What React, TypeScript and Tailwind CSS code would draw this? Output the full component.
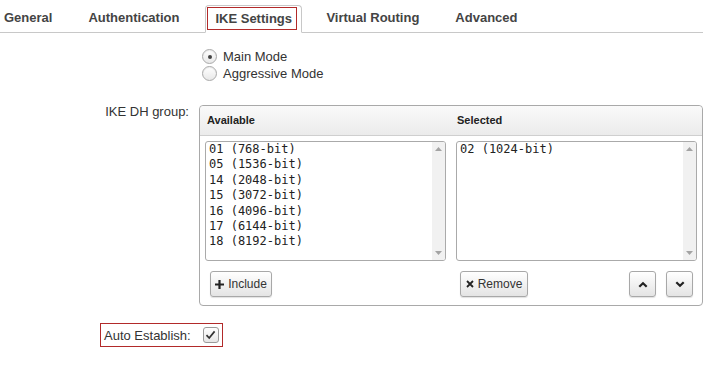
import React from "react";

const dhAvailable = [
  "01 (768-bit)",
  "05 (1536-bit)",
  "14 (2048-bit)",
  "15 (3072-bit)",
  "16 (4096-bit)",
  "17 (6144-bit)",
  "18 (8192-bit)",
];
const dhSelected = ["02 (1024-bit)"];

// Radio button
function Radio({ checked, label }: { checked?: boolean; label: string }) {
  return (
    <div className="flex items-center h-[17px]">
      <span className="w-[15px] h-[15px] rounded-full border border-[#a9a9a9] bg-gradient-to-b from-white to-[#e8e8e8] flex items-center justify-center shadow-[inset_0_1px_1px_rgba(0,0,0,0.08)]">
        {checked && <span className="w-[4px] h-[4px] rounded-full bg-[#444]" />}
      </span>
      <span className="ml-[6px] text-[13px] text-[#333] leading-[15px]">{label}</span>
    </div>
  );
}

// List box with a fake scrollbar
function ListBox({ items }: { items: string[] }) {
  return (
    <div className="w-[241px] h-[120px] border border-[#aaa] rounded-[3px] flex bg-white overflow-hidden">
      <div className="flex-1 pl-[3px] font-['DejaVu_Sans_Mono',monospace] text-[12px] leading-[15.4px] text-[#222]">
        {items.map((it) => (
          <div key={it}>{it}</div>
        ))}
      </div>
      <div className="w-[13px] bg-[#f1f1f1] flex flex-col justify-between items-center py-[5px]">
        <svg width="7" height="4" viewBox="0 0 7 4">
          <path d="M0 4 L3.5 0 L7 4 Z" fill="#a3a3a3" />
        </svg>
        <svg width="7" height="4" viewBox="0 0 7 4">
          <path d="M0 0 L3.5 4 L7 0 Z" fill="#a3a3a3" />
        </svg>
      </div>
    </div>
  );
}

function Button({ children, className }: { children: React.ReactNode; className?: string }) {
  return (
    <button
      className={`h-[26px] border border-[#a8a8a8] rounded-[3px] bg-gradient-to-b from-white to-[#e4e4e4] shadow-[0_1px_1px_rgba(0,0,0,0.12)] flex items-center justify-center text-[12px] text-[#333] ${className ?? ""}`}
    >
      {children}
    </button>
  );
}

export default function App() {
  return (
    <div className="w-[703px] h-[370px] bg-white overflow-hidden font-['Liberation_Sans',Arial,sans-serif] text-[#333]">
      {/* Tabs */}
      <div className="flex items-end h-[33px] border-b border-[#c8c8c8] text-[13px] font-bold text-[#444]">
        <div className="ml-[4px] pb-[5px]">General</div>
        <div className="ml-[36px] pb-[5px]">Authentication</div>
        <div className="ml-[26px] -mb-px h-[28px] w-[97px] border border-[#c8c8c8] border-b-white rounded-t-[4px] bg-white pt-px pl-px">
          <div className="h-[23px] w-[90px] border border-[#b22a2a] flex items-center pl-[7px]">IKE Settings</div>
        </div>
        <div className="ml-[24px] pb-[5px]">Virtual Routing</div>
        <div className="ml-[36px] pb-[5px]">Advanced</div>
      </div>

      {/* Mode */}
      <div className="pl-[202px] pt-[15px] flex flex-col">
        <Radio checked label="Main Mode" />
        <Radio label="Aggressive Mode" />
      </div>

      {/* DH group */}
      <div className="flex mt-[23px]">
        <div className="w-[199px] pr-[10px] text-right text-[13px] leading-[13px]">IKE DH group:</div>
        <div className="w-[504px] h-[201px] border border-[#a9a9a9] rounded-[4px] flex flex-col">
          <div className="h-[30px] bg-gradient-to-b from-[#fafafa] to-[#ebebeb] border-b border-[#cfcfcf] rounded-t-[4px] flex items-center text-[11px] font-bold text-[#222]">
            <div className="w-[250px] pl-[7px]">Available</div>
            <div className="pl-[7px]">Selected</div>
          </div>
          <div className="flex gap-[10px] px-[5px] pt-[5px]">
            <ListBox items={dhAvailable} />
            <ListBox items={dhSelected} />
          </div>
          <div className="flex items-center px-[5px] mt-[10px]">
            <div className="w-[251px] pl-[5px]">
              <Button className="w-[62px] gap-[4px]">
                <svg width="9" height="9" viewBox="0 0 9 9">
                  <path d="M3.4 0h2.2v3.4H9v2.2H5.6V9H3.4V5.6H0V3.4h3.4z" fill="#222" />
                </svg>
                Include
              </Button>
            </div>
            <div className="flex-1 flex items-center pl-[4px]">
              <Button className="w-[68px] gap-[4px]">
                <svg width="8" height="8" viewBox="0 0 8 8">
                  <path d="M1 1 L7 7 M7 1 L1 7" stroke="#222" strokeWidth="1.8" />
                </svg>
                Remove
              </Button>
              <div className="flex-1" />
              <Button className="w-[27px]">
                <svg width="10" height="7" viewBox="0 0 10 7">
                  <path d="M1.3 5.8 L5 2.2 L8.7 5.8" fill="none" stroke="#222" strokeWidth="2.2" />
                </svg>
              </Button>
              <Button className="w-[27px] ml-[10px] mr-[4px]">
                <svg width="10" height="7" viewBox="0 0 10 7">
                  <path d="M1.3 1.2 L5 4.8 L8.7 1.2" fill="none" stroke="#222" strokeWidth="2.2" />
                </svg>
              </Button>
            </div>
          </div>
        </div>
      </div>

      {/* Auto establish */}
      <div className="ml-[100px] mt-[17px] w-[123px] h-[24px] border border-[#b22a2a] flex items-center pl-[3px]">
        <span className="text-[13px] leading-[15px]">Auto Establish:</span>
        <span className="ml-[12px] w-[16px] h-[16px] rounded-[3px] border border-[#9a9a9a] bg-gradient-to-b from-white to-[#e6e6e6] flex items-center justify-center">
          <svg width="11" height="10" viewBox="0 0 11 10">
            <path d="M1.5 5.2 L4.2 8 L9.6 1.4" fill="none" stroke="#333" strokeWidth="1.7" />
          </svg>
        </span>
      </div>
    </div>
  );
}
